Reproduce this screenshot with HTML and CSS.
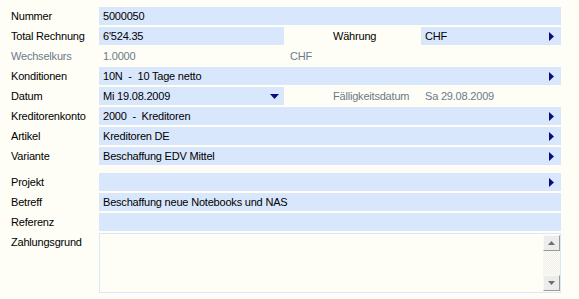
FILE: index.html
```html
<!DOCTYPE html>
<html>
<head>
<meta charset="utf-8">
<link rel="stylesheet" href="styles.css">
</head>
<body>
<div class="form">
  <div class="lbl">Nummer</div>
  <div class="fld full"><span>5000050</span></div>

  <div class="lbl">Total Rechnung</div>
  <div class="fld"><span>6'524.35</span></div>
  <div class="lbl lbl2">Währung</div>
  <div class="fld arr"><span>CHF</span><svg width="5" height="9" viewBox="0 0 5 9"><polygon points="0,0 5,4.5 0,9"/></svg></div>

  <div class="lbl dim">Wechselkurs</div>
  <div class="val dim">1.0000</div>
  <div class="val dim cur">CHF</div>
  <div class="empty"></div>

  <div class="lbl">Konditionen</div>
  <div class="fld full arr"><span>10N &nbsp;- &nbsp;10 Tage netto</span><svg width="5" height="9" viewBox="0 0 5 9"><polygon points="0,0 5,4.5 0,9"/></svg></div>

  <div class="lbl">Datum</div>
  <div class="fld drop"><span>Mi 19.08.2009</span><svg width="9" height="5" viewBox="0 0 9 5"><polygon points="0,0 9,0 4.5,5"/></svg></div>
  <div class="lbl lbl2 dim">Fälligkeitsdatum</div>
  <div class="val dim">Sa 29.08.2009</div>

  <div class="lbl">Kreditorenkonto</div>
  <div class="fld full arr"><span>2000 &nbsp;- &nbsp;Kreditoren</span><svg width="5" height="9" viewBox="0 0 5 9"><polygon points="0,0 5,4.5 0,9"/></svg></div>

  <div class="lbl">Artikel</div>
  <div class="fld full arr"><span>Kreditoren DE</span><svg width="5" height="9" viewBox="0 0 5 9"><polygon points="0,0 5,4.5 0,9"/></svg></div>

  <div class="lbl">Variante</div>
  <div class="fld full arr"><span>Beschaffung EDV Mittel</span><svg width="5" height="9" viewBox="0 0 5 9"><polygon points="0,0 5,4.5 0,9"/></svg></div>

  <div class="lbl sep">Projekt</div>
  <div class="fld full arr sep"><span></span><svg width="5" height="9" viewBox="0 0 5 9"><polygon points="0,0 5,4.5 0,9"/></svg></div>

  <div class="lbl">Betreff</div>
  <div class="fld full"><span>Beschaffung neue Notebooks und NAS</span></div>

  <div class="lbl">Referenz</div>
  <div class="fld full"><span></span></div>

  <div class="lbl">Zahlungsgrund</div>
  <div class="memo full">
    <div class="scroll">
      <div class="sbtn"><svg width="7" height="4" viewBox="0 0 7 4"><polygon points="3.5,0 7,4 0,4"/></svg></div>
      <div class="track"></div>
      <div class="sbtn"><svg width="7" height="4" viewBox="0 0 7 4"><polygon points="0,0 7,0 3.5,4"/></svg></div>
    </div>
  </div>
</div>
</body>
</html>
```

FILE: styles.css
```css
html, body {
  margin: 0;
  padding: 0;
  background: #fefef6;
}

body {
  font-family: "Liberation Sans", Arial, sans-serif;
  font-size: 11px;
  letter-spacing: -0.2px;
  color: #000;
}

.form {
  display: grid;
  grid-template-columns: 88px 185px 49px 88px 140px;
  grid-auto-rows: auto;
  row-gap: 2px;
  padding: 7px 0 0 11px;
}

.lbl {
  grid-column: 1;
  display: flex;
  align-items: center;
  white-space: nowrap;
  height: 18px;
  align-self: start;
}

.lbl2 {
  grid-column: 4;
}

.dim {
  color: #6b7a8b;
}

.fld {
  height: 18px;
  box-sizing: border-box;
  background: #d9e7fd;
  display: flex;
  align-items: center;
  justify-content: space-between;
  padding: 0 7px 0 4px;
  white-space: nowrap;
}

.fld.drop {
  padding-right: 5px;
}

.fld svg {
  fill: #0c0c82;
  display: block;
}

.full {
  grid-column: 2 / 6;
}

.val {
  height: 18px;
  display: flex;
  align-items: center;
  padding-left: 4px;
  white-space: nowrap;
}

.val.cur {
  grid-column: 3 / 5;
  padding-left: 6px;
}

.empty {
  grid-column: 5;
}

.sep {
  margin-top: 6px;
}

.memo {
  height: 60px;
  box-sizing: border-box;
  border: 1px solid #d9e7fd;
  display: flex;
  justify-content: flex-end;
  padding: 1px 0;
}

.scroll {
  width: 17px;
  display: flex;
  flex-direction: column;
  background-color: #fefef6;
  background-image: repeating-conic-gradient(#ededea 0 25%, #fefef6 0 50%);
  background-size: 2px 2px;
}

.sbtn {
  height: 16px;
  box-sizing: border-box;
  background: #ececec;
  border-right: 1px solid #9a9a9a;
  border-bottom: 1px solid #9a9a9a;
  border-top: 1px solid #f8f8f8;
  border-left: 1px solid #f8f8f8;
  display: flex;
  align-items: center;
  justify-content: center;
}

.sbtn svg {
  fill: #6e6e6e;
  display: block;
}

.track {
  flex: 1;
}
```
